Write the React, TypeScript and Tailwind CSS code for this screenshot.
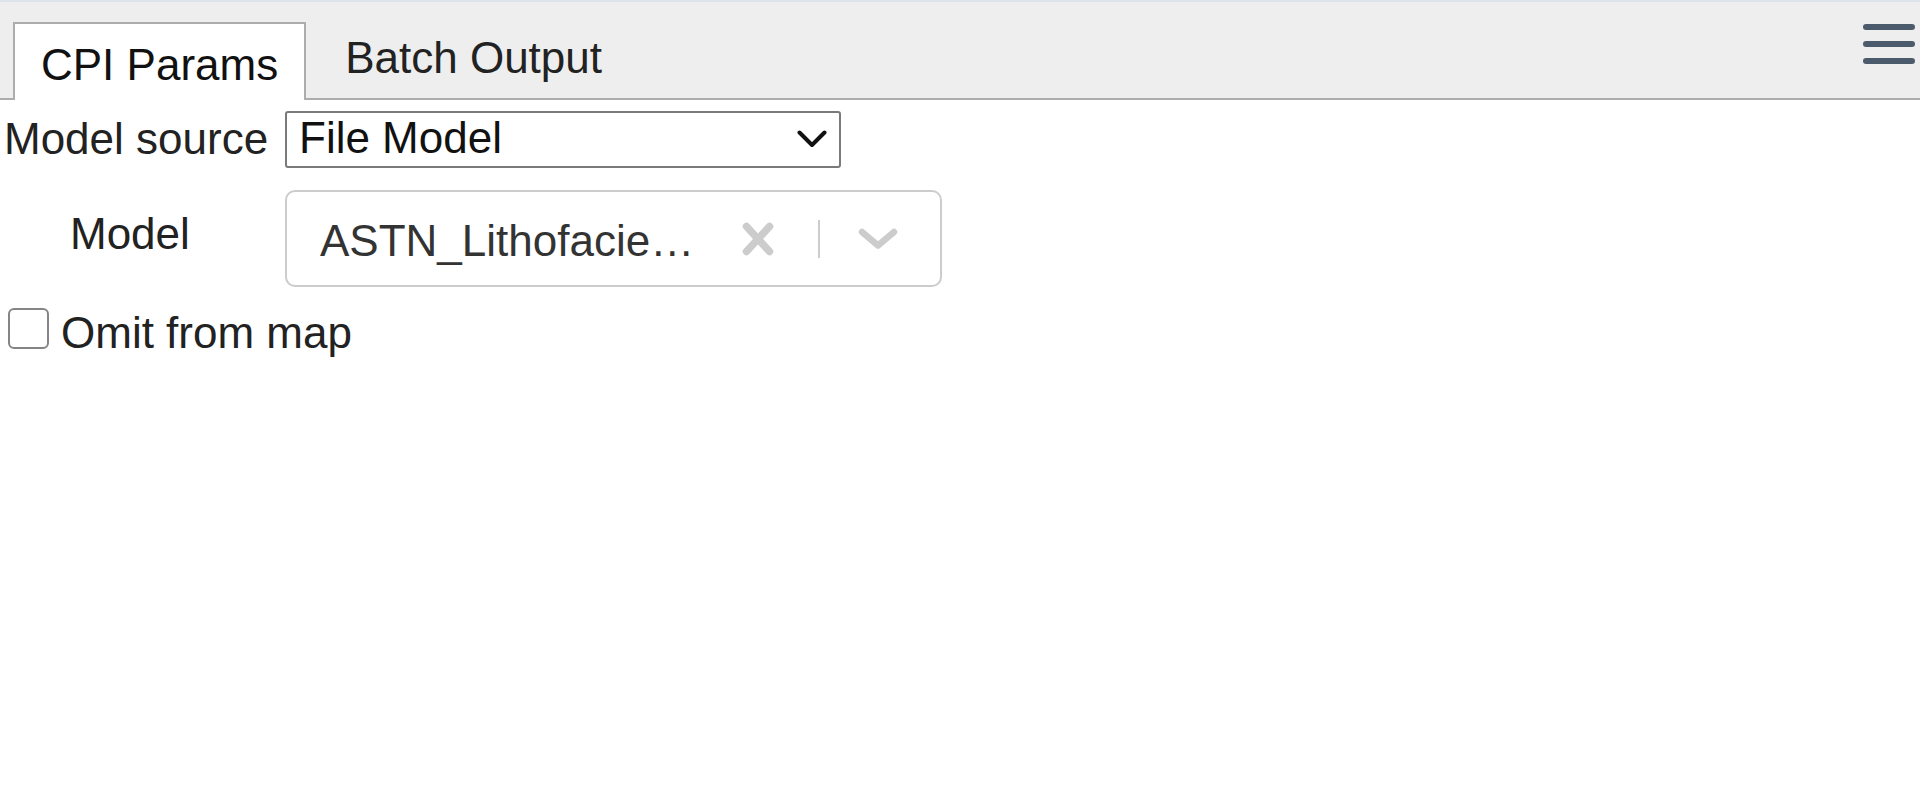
import React from "react";

function MenuIcon() {
  return (
    <svg width="54" height="46" viewBox="0 0 54 46" fill="none">
      <line x1="4" y1="6" x2="50" y2="6" stroke="#4b5b6b" strokeWidth="6" strokeLinecap="round" />
      <line x1="4" y1="23" x2="50" y2="23" stroke="#4b5b6b" strokeWidth="6" strokeLinecap="round" />
      <line x1="4" y1="40" x2="50" y2="40" stroke="#4b5b6b" strokeWidth="6" strokeLinecap="round" />
    </svg>
  );
}

export default function App() {
  return (
    <div className="min-h-screen w-full bg-white font-['Liberation_Sans',Arial,sans-serif] text-[44px] text-[#1f1f1f]">
      <div className="h-[2px] bg-[#dce3ea]" />
      <div className="flex h-[98px] items-start border-b-2 border-[#adadad] bg-[#eeeeee]">
        <div className="ml-[13px] mt-[20px] h-[78px] border-2 border-b-0 border-[#adadad] bg-white px-[26px] pt-[19px] leading-[43px] text-[#111]">
          CPI Params
        </div>
        <div className="ml-[39px] mt-[34px] leading-[43px] text-[#222]">Batch Output</div>
        <div className="ml-auto mr-[4px] mt-[19px]">
          <MenuIcon />
        </div>
      </div>

      <div className="mt-[11px] flex items-start">
        <div className="w-[285px] pl-[4px] pt-[6px] leading-[43px] text-[#222]">Model source</div>
        <div className="flex h-[57px] w-[556px] items-center justify-between rounded-[3px] border-2 border-[#7a7a7a] pb-[4px] pl-[12px] pr-[12px]">
          <span className="leading-[43px] text-[#111]">File Model</span>
          <svg width="30" height="18" viewBox="0 0 30 18" fill="none" className="mt-[3px]">
            <polyline points="2.5,2.5 15,15 27.5,2.5" stroke="#111" strokeWidth="4" strokeLinecap="round" strokeLinejoin="round" />
          </svg>
        </div>
      </div>

      <div className="mt-[22px] flex items-start">
        <div className="w-[285px] pl-[70px] pt-[22px] leading-[43px] text-[#222]">Model</div>
        <div className="flex h-[97px] w-[657px] items-center rounded-[10px] border-2 border-[#cccccc] pr-[42px]">
          <div className="flex-1 whitespace-nowrap pl-[33px] pt-[3px] leading-[43px] text-[#333]">ASTN_Lithofacie…</div>
          <svg width="32" height="34" viewBox="0 0 32 34" fill="none">
            <line x1="4.5" y1="4.5" x2="27.5" y2="29.5" stroke="#cccccc" strokeWidth="7.5" strokeLinecap="round" />
            <line x1="27.5" y1="4.5" x2="4.5" y2="29.5" stroke="#cccccc" strokeWidth="7.5" strokeLinecap="round" />
          </svg>
          <div className="ml-[44px] h-[38px] w-[2px] bg-[#cccccc]" />
          <svg width="40" height="22" viewBox="0 0 40 22" fill="none" className="ml-[38px]">
            <polyline points="4,4 20,17.5 36,4" stroke="#cccccc" strokeWidth="6.5" strokeLinecap="round" strokeLinejoin="round" />
          </svg>
        </div>
      </div>

      <div className="mt-[21px] flex items-start">
        <div className="ml-[8px] h-[41px] w-[41px] rounded-[6px] border-2 border-[#858585] bg-white" />
        <div className="ml-[12px] mt-[3px] leading-[43px] text-[#222]">Omit from map</div>
      </div>
    </div>
  );
}
